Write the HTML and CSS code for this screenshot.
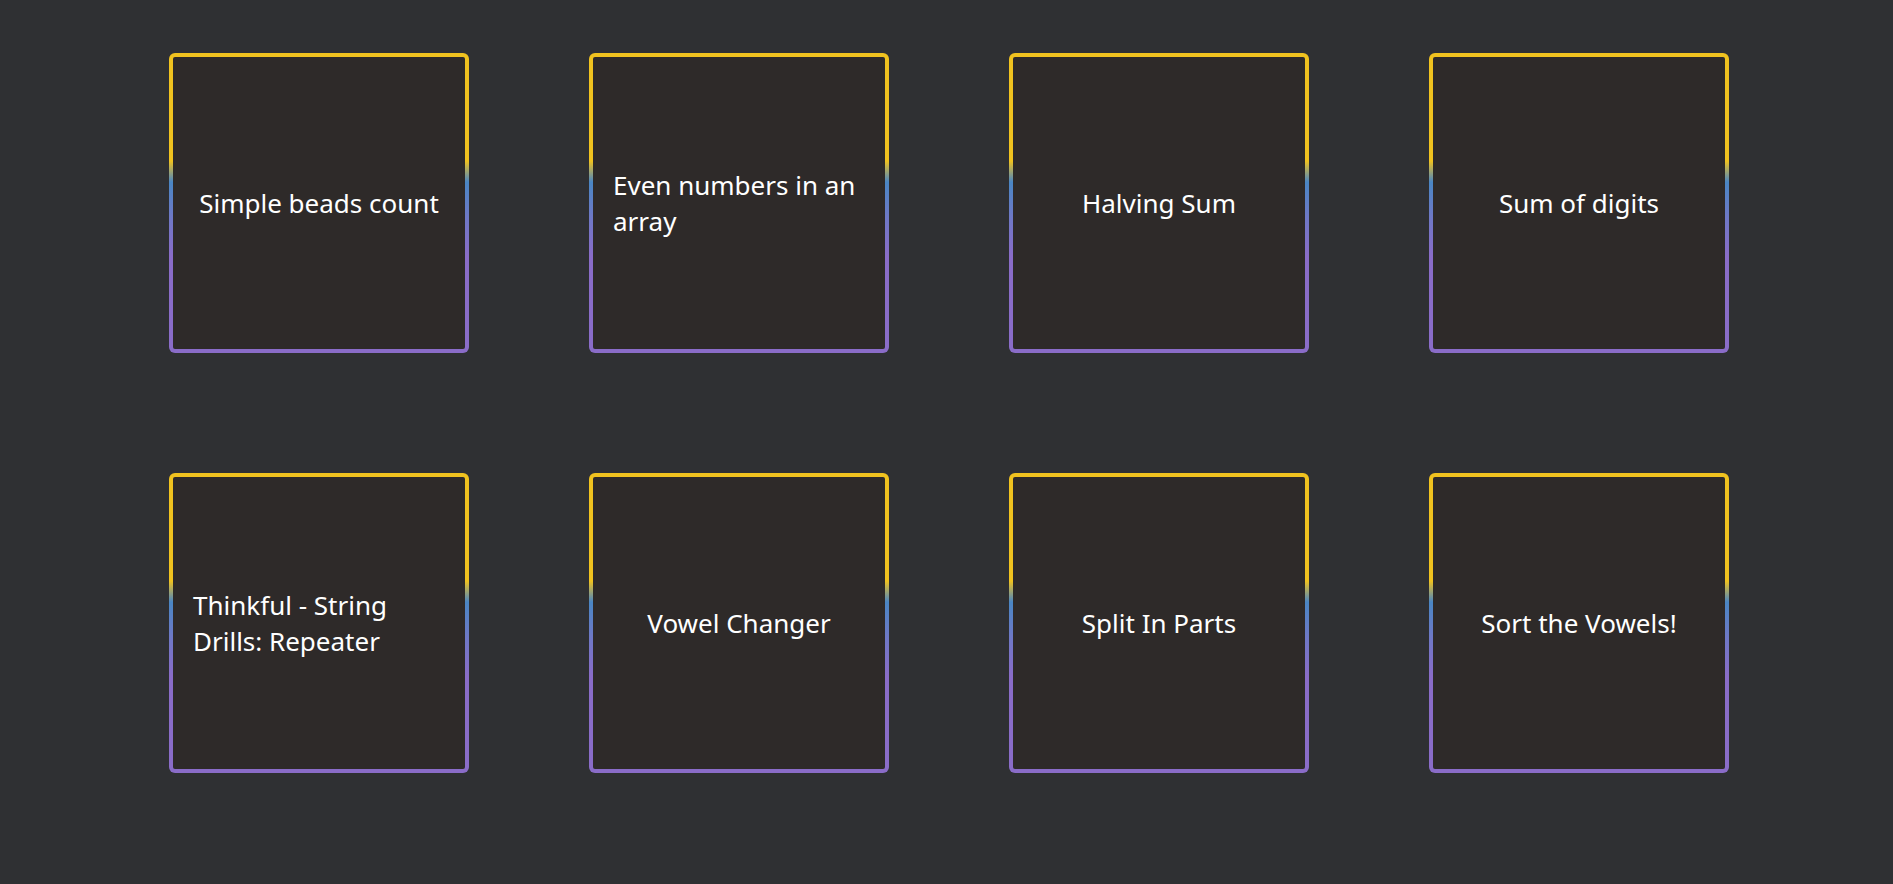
FILE: index.html
```html
<!DOCTYPE html>
<html lang="en">
<head>
<meta charset="utf-8">
<title>Katas</title>
<link rel="stylesheet" href="styles.css">
</head>
<body>
<main class="grid">
  <div class="card"><p class="title">Simple beads count</p></div>
  <div class="card"><p class="title">Even numbers in an array</p></div>
  <div class="card"><p class="title">Halving Sum</p></div>
  <div class="card"><p class="title">Sum of digits</p></div>
  <div class="card"><p class="title">Thinkful - String Drills: Repeater</p></div>
  <div class="card"><p class="title">Vowel Changer</p></div>
  <div class="card"><p class="title">Split In Parts</p></div>
  <div class="card"><p class="title">Sort the Vowels!</p></div>
</main>
</body>
</html>
```
FILE: styles.css
```css
html, body {
  margin: 0;
  padding: 0;
  background: #2f3033;
  height: 100%;
}
body {
  font-family: "Noto Sans", "Open Sans", sans-serif;
  color: #ffffff;
}
.grid {
  display: grid;
  grid-template-columns: repeat(4, 300px);
  column-gap: 120px;
  row-gap: 120px;
  padding: 53px 0 0 169px;
}
.card {
  box-sizing: border-box;
  width: 300px;
  height: 300px;
  border: 4px solid transparent;
  border-radius: 6px;
  background:
    linear-gradient(#2e2a29, #2e2a29) padding-box,
    linear-gradient(to bottom, #f0c21f 0%, #f0c21f 36%, #4a86c4 43%, #6f78c6 55%, #8a6cc8 68%, #8a6cc8 100%) border-box;
  display: flex;
  align-items: center;
  justify-content: center;
  padding: 0 20px;
}
.title {
  margin: 0;
  font-size: 26px;
  line-height: 36px;
  text-align: left;
}
```
